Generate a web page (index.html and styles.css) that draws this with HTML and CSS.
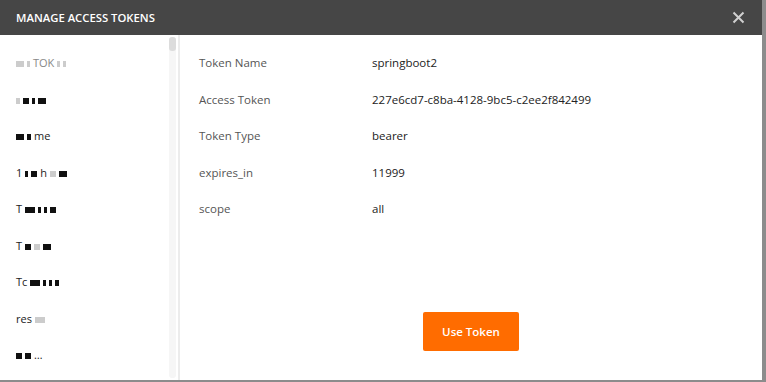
FILE: index.html
```html
<!DOCTYPE html>
<html lang="en">
<head>
	<meta charset="UTF-8">
	<title>Manage Access Tokens</title>
	<link rel="stylesheet" href="styles.css">
</head>
<body>
	<div class="modal">
		<div class="head">
			<h2>MANAGE ACCESS TOKENS</h2>
			<svg class="close" width="13" height="13" viewBox="0 0 13 13"><path d="M1.5 1.5L11.5 11.5M11.5 1.5L1.5 11.5" stroke="#d0d0d0" stroke-width="2" fill="none"/></svg>
		</div>
		<div class="body">
			<div class="side">
				<ul class="list">
					<li class="dim"><i class="px g w8"></i><i class="px g w3"></i>TOK<i class="px g w3"></i><i class="px g w3"></i></li>
					<li><i class="px g w4"></i><i class="px w6"></i><i class="px w3"></i><i class="px w8"></i></li>
					<li><i class="px w8"></i><i class="px w4"></i>me</li>
					<li>1<i class="px w3"></i><i class="px w6"></i>h<i class="px g w6"></i><i class="px w8"></i></li>
					<li>T<i class="px w10"></i><i class="px w3"></i><i class="px w3"></i><i class="px w6"></i></li>
					<li>T<i class="px w6"></i><i class="px g w6"></i><i class="px w8"></i></li>
					<li>Tc<i class="px w10"></i><i class="px w3"></i><i class="px w3"></i><i class="px w4"></i></li>
					<li>res<i class="px g w10"></i></li>
					<li><i class="px w6"></i><i class="px w6"></i>&hellip;</li>
				</ul>
				<div class="track"><div class="thumb"></div></div>
			</div>
			<div class="detail">
				<table class="info">
					<tr><td class="k">Token Name</td><td>springboot2</td></tr>
					<tr><td class="k">Access Token</td><td>227e6cd7-c8ba-4128-9bc5-c2ee2f842499</td></tr>
					<tr><td class="k">Token Type</td><td>bearer</td></tr>
					<tr><td class="k">expires_in</td><td>11999</td></tr>
					<tr><td class="k">scope</td><td>all</td></tr>
				</table>
				<div class="foot">
					<button class="use">Use Token</button>
				</div>
			</div>
		</div>
	</div>
</body>
</html>
```

FILE: styles.css
```css
*{margin: 0;padding: 0;box-sizing: border-box;list-style: none;font-family: "Open Sans","Noto Sans",sans-serif}
body{width: 766px;height: 382px;background: #8c8c8c;overflow: hidden}
.modal{width: 762px;height: 380px;background: white;display: flex;flex-direction: column}
.head{height: 35px;background: #464646;display: flex;align-items: center;justify-content: space-between;padding: 0 17px 0 16px}
.head h2{font-size: 11.3px;font-weight: 600;color: #fff;letter-spacing: 0}
.body{flex: 1;display: flex;min-height: 0}
.side{width: 180px;display: flex;border-right: 2px solid #ececec}
.list{flex: 1;padding: 20px 0 0 16px}
.list li{height: 36.5px;font-size: 11px;color: #222;display: flex;align-items: flex-start;gap: 3px;line-height: 16px}
.list li.dim{color: #888}
.px{display: inline-block;height: 6px;margin-top: 6px;background: #111;font-style: normal}
.px.g{background: #ccc}
.w3{width: 3px}.w4{width: 4px}.w6{width: 6px}.w8{width: 8px}.w10{width: 10px}
.track{width: 7px;margin: 2px 2px 2px 0;background: #f6f6f6;border-radius: 3px}
.thumb{height: 14px;background: #dcdcdc;border-radius: 3px}
.detail{flex: 1;display: flex;flex-direction: column;padding: 20px 0 29px 19px}
.info{border-collapse: collapse;font-size: 11.5px}
.info td{height: 36.5px;vertical-align: top;color: #222;line-height: 16px}
.info td.k{width: 173px;color: #555}
.foot{flex: 1;display: flex;align-items: flex-end;justify-content: center;padding-right: 19px}
.use{width: 96px;height: 39px;background: #ff6c00;border: none;border-radius: 2px;color: #fff;font-size: 11.5px;font-weight: 600}
```
